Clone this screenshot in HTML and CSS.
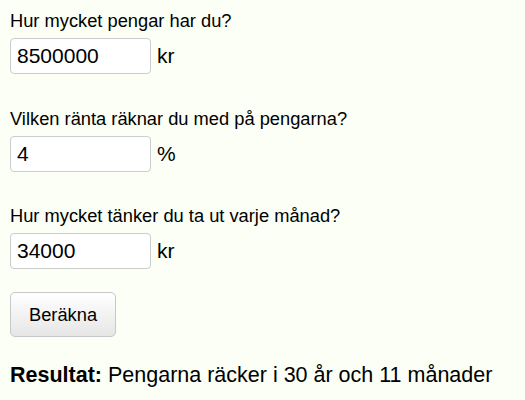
FILE: index.html
```html
<!DOCTYPE html>
<html lang="sv">
<head>
<meta charset="utf-8">
<link rel="stylesheet" href="styles.css">
</head>
<body>
<form class="calc">
  <div class="field">
    <label class="label" for="a">Hur mycket pengar har du?</label>
    <div class="row"><input id="a" class="input" value="8500000"><span class="unit">kr</span></div>
  </div>
  <div class="field">
    <label class="label" for="b">Vilken ränta räknar du med på pengarna?</label>
    <div class="row"><input id="b" class="input" value="4"><span class="unit">%</span></div>
  </div>
  <div class="field">
    <label class="label" for="c">Hur mycket tänker du ta ut varje månad?</label>
    <div class="row"><input id="c" class="input" value="34000"><span class="unit">kr</span></div>
  </div>
  <button type="button" class="btn">Beräkna</button>
  <p class="result"><strong>Resultat:</strong> Pengarna räcker i 30 år och 11 månader</p>
</form>
</body>
</html>
```
FILE: styles.css
```css
html, body {
  margin: 0;
  background: #fbfff5;
}
body {
  padding: 10px;
  font-family: "Liberation Sans", Arial, sans-serif;
  color: #000;
}
.calc {
  display: flex;
  flex-direction: column;
  align-items: flex-start;
}
.field {
  display: flex;
  flex-direction: column;
  margin-bottom: 33.5px;
}
.field:last-of-type {
  margin-bottom: 23px;
}
.label {
  font-size: 18.3px;
  line-height: 22px;
}
.row {
  display: flex;
  align-items: center;
  gap: 6px;
  margin-top: 6px;
}
.input {
  box-sizing: border-box;
  width: 141px;
  height: 36px;
  padding: 0 6px;
  border: 1px solid #cccccc;
  border-radius: 4px;
  background: #fff;
  font-family: "Liberation Sans", Arial, sans-serif;
  font-size: 21px;
  color: #000;
}
.unit {
  font-size: 21px;
}
.btn {
  box-sizing: border-box;
  height: 45px;
  padding: 0 18px;
  border: 1px solid #c8c8c8;
  border-radius: 5px;
  background: linear-gradient(#ffffff, #e6e6e6);
  font-family: "Liberation Sans", Arial, sans-serif;
  font-size: 18.3px;
  color: #000;
}
.result {
  margin: 26px 0 0;
  font-size: 21.5px;
}
```
